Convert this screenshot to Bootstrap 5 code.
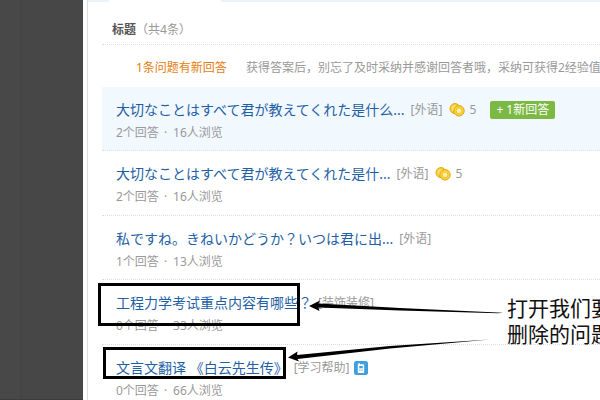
<!DOCTYPE html>
<html lang="zh-CN">
<head>
<meta charset="utf-8">
<meta name="viewport" content="width=device-width, initial-scale=1">
<title>我的提问</title>
<link href="https://cdn.jsdelivr.net/npm/bootstrap@5.3.0/dist/css/bootstrap.min.css" rel="stylesheet">
<style>
body { font-family: "Noto Sans", "Noto Sans CJK SC", sans-serif; font-size: 12px; line-height: 22px; color: #999; background: #fff; }
.side-rail { width: 83px; background: linear-gradient(90deg, #484848 20px, #434343 21px, #474747 23px); border-bottom: 1px solid #3c3c3c; }
.panel { margin-left: 4px; border-left: 1px solid #ddd; min-width: 0; }
.tab-strip { height: 2px; background: #e9f4fc; padding-left: 21px; }
.tab-on { width: 112px; background: #fff; }
.sheet { margin-left: 14px; }
.list-head { padding: 17px 10px 3px; border-bottom: 1px dotted #ddd; }
.list-head h1 { font-size: 12px; line-height: 22px; color: #555; }
.tip { padding: 12px 0 8px 34px; gap: 19px; white-space: nowrap; overflow: hidden; }
.tip a { color: #e57d10; }
.question { padding: 12px 0 5px 14px; border-bottom: 1px dotted #ddd; white-space: nowrap; }
.question:nth-child(even) { padding-bottom: 6px; }
.question.unread { background: #f1f8fe; }
.q-link { font-size: 14px; color: #1f5fa6; }
.q-stat { line-height: 24px; }
.q-kind { margin-left: 6px; }
.q-coin { margin: 0 5px 0 6px; }
.q-new { background: #7cb944; color: #fff; border-radius: 2px; line-height: 18px; padding: 0 6px; margin-left: 14px; }
.q-phone { margin-left: 4px; }
.wide-mark { font-family: "Noto Sans CJK JP", sans-serif; line-height: 1; }
.dot { margin: 0 6px 0 5px; }
.mark-box { border: 3px solid #000; }
.box-a { left: 98px; top: 283px; width: 202px; height: 43px; }
.box-b { left: 103px; top: 347px; width: 183px; height: 32px; }
.arrows { left: 280px; top: 290px; }
.note { left: 507px; top: 295px; font-size: 21px; line-height: 26px; color: #111; white-space: nowrap; }
</style>
</head>
<body>
<svg class="d-none" aria-hidden="true">
  <symbol id="coin" viewBox="0 0 16 14">
    <circle cx="6" cy="5.6" r="5" fill="#f7cf3a" stroke="#dfa51b"/>
    <circle cx="5.500" cy="5.2" r="3" fill="#fbe067"/>
    <circle cx="10" cy="7.8" r="5.2" fill="#fbd83c" stroke="#dda31a"/>
    <circle cx="10" cy="7.8" r="3" fill="#fff0a0" stroke="#f0bd28"/>
  </symbol>
</svg>
<div class="position-relative vh-100 overflow-hidden d-flex">
  <aside class="side-rail flex-shrink-0"></aside>
  <main class="panel flex-grow-1">
    <div class="tab-strip d-flex"><div class="tab-on"></div></div>
    <div class="sheet">
      <header class="list-head d-flex"><h1 class="m-0 fw-bold">标题</h1><span>（共4条）</span></header>
      <div class="tip d-flex"><a href="#" class="text-decoration-none">1条问题有新回答</a><span>获得答案后，别忘了及时采纳并感谢回答者哦，采纳可获得2经验值奖励</span></div>
      <ul class="list-unstyled m-0">
        <li class="question unread">
          <div class="d-flex align-items-center"><a href="#" class="q-link text-decoration-none">大切なことはすべて君が教えてくれた是什么...</a><span class="q-kind">[外语]</span><svg class="q-coin" width="16" height="14" aria-hidden="true"><use href="#coin"/></svg><span>5</span><span class="q-new">+ 1新回答</span></div>
          <div class="q-stat">2个回答<span class="dot">·</span>16人浏览</div>
        </li>
        <li class="question">
          <div class="d-flex align-items-center"><a href="#" class="q-link text-decoration-none">大切なことはすべて君が教えてくれた是什...</a><span class="q-kind">[外语]</span><svg class="q-coin" width="16" height="14" aria-hidden="true"><use href="#coin"/></svg><span>5</span></div>
          <div class="q-stat">2个回答<span class="dot">·</span>16人浏览</div>
        </li>
        <li class="question">
          <div class="d-flex align-items-center"><a href="#" class="q-link text-decoration-none">私ですね。きねいかどうか<span class="wide-mark" lang="ja">？</span>いつは君に出...</a><span class="q-kind">[外语]</span></div>
          <div class="q-stat">1个回答<span class="dot">·</span>13人浏览</div>
        </li>
        <li class="question">
          <div class="d-flex align-items-center"><a href="#" class="q-link text-decoration-none">工程力学考试重点内容有哪些<span class="wide-mark" lang="ja">？</span></a><span class="q-kind">[装饰装修]</span></div>
          <div class="q-stat">0个回答<span class="dot">·</span>33人浏览</div>
        </li>
        <li class="question">
          <div class="d-flex align-items-center"><a href="#" class="q-link text-decoration-none">文言文翻译 《白云先生传》</a><span class="q-kind">[学习帮助]</span><svg class="q-phone" width="14" height="14" viewBox="0 0 14 14" aria-hidden="true"><rect width="14" height="14" rx="2.5" fill="#3d9fe0"/><path d="M4.500 2h1.2v1.2H9.500a.7.7 0 0 1 .7.7v7.4a.7.7 0 0 1-.7.7h-5a.7.7 0 0 1-.7-.7V3.2h.7z" fill="#fff"/><path d="M5.300 5h3.400v2.200H5.300zM5.300 8.400h1.200v1H5.300zM7.500 8.400h1.200v1H7.500z" fill="#3d9fe0"/></svg></div>
          <div class="q-stat">0个回答<span class="dot">·</span>66人浏览</div>
        </li>
      </ul>
    </div>
  </main>
  <div class="mark-box box-a position-absolute"></div>
  <div class="mark-box box-b position-absolute"></div>
  <svg class="arrows position-absolute" width="225" height="75" viewBox="0 0 225 75" aria-hidden="true">
    <path d="M29 16 40 10.500 38.500 13.500 120 18 223 22.700 218 23.200 120 20.500 38.500 17.500 39.500 21z"/>
    <path d="M8 67.500 17.500 61.500 17 65 110 56 210 49.500 110 58.500 17.500 69 19 71.500z"/>
  </svg>
  <div class="note position-absolute">打开我们要<br>删除的问题</div>
</div>
<script src="https://cdn.jsdelivr.net/npm/bootstrap@5.3.0/dist/js/bootstrap.bundle.min.js"></script>
</body>
</html>
